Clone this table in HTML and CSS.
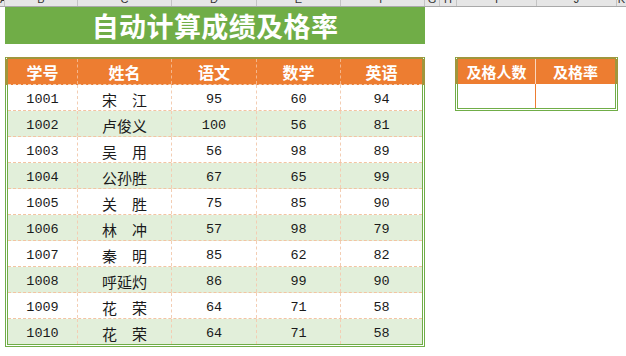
FILE: index.html
```html
<!DOCTYPE html>
<html lang="zh">
<head>
<meta charset="utf-8">
<link rel="stylesheet" href="styles.css">
</head>
<body>
<div class="colbar">
  <div class="col w-a"><span>A</span></div>
  <div class="col w-b"><span>B</span></div>
  <div class="col w-c"><span>C</span></div>
  <div class="col w-d"><span>D</span></div>
  <div class="col w-e"><span>E</span></div>
  <div class="col w-f"><span>F</span></div>
  <div class="col w-g"><span>G</span></div>
  <div class="col w-h"><span>H</span></div>
  <div class="col w-i"><span>I</span></div>
  <div class="col w-j"><span>J</span></div>
  <div class="col w-k"><span>K</span></div>
</div>
<div class="sheet">
  <div class="title">自动计算成绩及格率</div>
  <div class="tables">
    <div class="main">
      <div class="row head"><div>学号</div><div>姓名</div><div>语文</div><div>数学</div><div>英语</div></div>
      <div class="row"><div class="num">1001</div><div class="name">宋　江</div><div class="num">95</div><div class="num">60</div><div class="num">94</div></div>
      <div class="row alt"><div class="num">1002</div><div class="name">卢俊义</div><div class="num">100</div><div class="num">56</div><div class="num">81</div></div>
      <div class="row"><div class="num">1003</div><div class="name">吴　用</div><div class="num">56</div><div class="num">98</div><div class="num">89</div></div>
      <div class="row alt"><div class="num">1004</div><div class="name">公孙胜</div><div class="num">67</div><div class="num">65</div><div class="num">99</div></div>
      <div class="row"><div class="num">1005</div><div class="name">关　胜</div><div class="num">75</div><div class="num">85</div><div class="num">90</div></div>
      <div class="row alt"><div class="num">1006</div><div class="name">林　冲</div><div class="num">57</div><div class="num">98</div><div class="num">79</div></div>
      <div class="row"><div class="num">1007</div><div class="name">秦　明</div><div class="num">85</div><div class="num">62</div><div class="num">82</div></div>
      <div class="row alt"><div class="num">1008</div><div class="name">呼延灼</div><div class="num">86</div><div class="num">99</div><div class="num">90</div></div>
      <div class="row"><div class="num">1009</div><div class="name">花　荣</div><div class="num">64</div><div class="num">71</div><div class="num">58</div></div>
      <div class="row alt last"><div class="num">1010</div><div class="name">花　荣</div><div class="num">64</div><div class="num">71</div><div class="num">58</div></div>
    </div>
    <div class="small">
      <div class="srow shead"><div>及格人数</div><div>及格率</div></div>
      <div class="srow sbody"><div></div><div></div></div>
    </div>
  </div>
</div>
</body>
</html>
```
FILE: styles.css
```css
* { box-sizing: border-box; }
html, body { margin: 0; padding: 0; background: #fff; }
body { width: 626px; height: 356px; overflow: hidden; font-family: "Noto Sans CJK SC", sans-serif; }

.colbar {
  display: flex;
  height: 7px;
  background: #e6e6e6;
  border-bottom: 1px solid #a9a9a9;
  overflow: hidden;
}
.col {
  flex: none;
  border-right: 1px solid #c4c4c4;
  text-align: center;
  overflow: hidden;
  font-family: "Liberation Sans", sans-serif;
  font-size: 11px;
  color: #333;
}
.col span { display: block; line-height: 11px; margin-top: -6px; }
.w-a { width: 5px; text-align: left; }
.w-b { width: 73px; }
.w-c { width: 94px; }
.w-d { width: 85px; }
.w-e { width: 84px; }
.w-f { width: 84px; }
.w-g { width: 15px; }
.w-h { width: 17px; }
.w-i { width: 80px; }
.w-j { width: 80px; }
.w-k { flex: 1; border-right: none; }

.sheet { padding-left: 5px; }

.title {
  width: 420px;
  height: 37px;
  background: #70ad47;
  color: #fff;
  font-weight: 700;
  font-size: 27px;
  line-height: 38px;
  text-align: center;
  letter-spacing: 0.4px;
}

.tables { display: flex; align-items: flex-start; margin-top: 13px; }

.main {
  width: 420px;
  border: 3px double #70ad47;
  border-top: 2px solid #a0963c;
}
.row {
  display: grid;
  grid-template-columns: 70px 94px 85px 84px 81px;
  height: 26px;
  border-bottom: 1px dashed #f3c4a2;
  font-size: 15px;
  color: #1a1a1a;
}
.row.alt { background: #e2efda; }
.row.last { height: 25px; border-bottom: none; }
.row > div {
  display: flex;
  align-items: center;
  justify-content: center;
  padding-top: 3px;
  border-right: 1px dashed #f3cdb3;
}
.row > div:last-child { border-right: none; }
.num { font-family: "Liberation Mono", monospace; font-size: 13.5px; }
.name { font-size: 15px; }

.head {
  position: relative;
  background: #ed7d31;
  color: #fff;
  font-weight: 700;
  font-size: 16px;
  border-bottom: 1px dashed #f7d2b8;
}
.head > div { padding-top: 1px; border-right: 1px dashed #f5b68c; }
.head::before {
  content: "";
  position: absolute;
  left: -3px; right: -3px; top: 0; bottom: -1px;
  border-left: 3px solid #a0963c;
  border-right: 3px solid #a0963c;
  pointer-events: none;
}

.small {
  width: 163px;
  margin-left: 30px;
  border: 3px double #70ad47;
  border-top: 2px solid #a0963c;
}
.srow { display: grid; grid-template-columns: 78px 79px; }
.shead {
  position: relative;
  height: 25px;
  background: #ed7d31;
  color: #fff;
  font-weight: 700;
  font-size: 15px;
}
.shead::before {
  content: "";
  position: absolute;
  left: -3px; right: -3px; top: 0; bottom: 0;
  border-left: 3px solid #a0963c;
  border-right: 3px solid #a0963c;
  pointer-events: none;
}
.shead > div {
  display: flex; align-items: center; justify-content: center;
  border-right: 1px solid #f8d6bf;
}
.shead > div:last-child { border-right: none; }
.sbody { height: 24px; background: #fff; }
.sbody > div { border-right: 1px solid #ed7d31; }
.sbody > div:last-child { border-right: none; }
```
